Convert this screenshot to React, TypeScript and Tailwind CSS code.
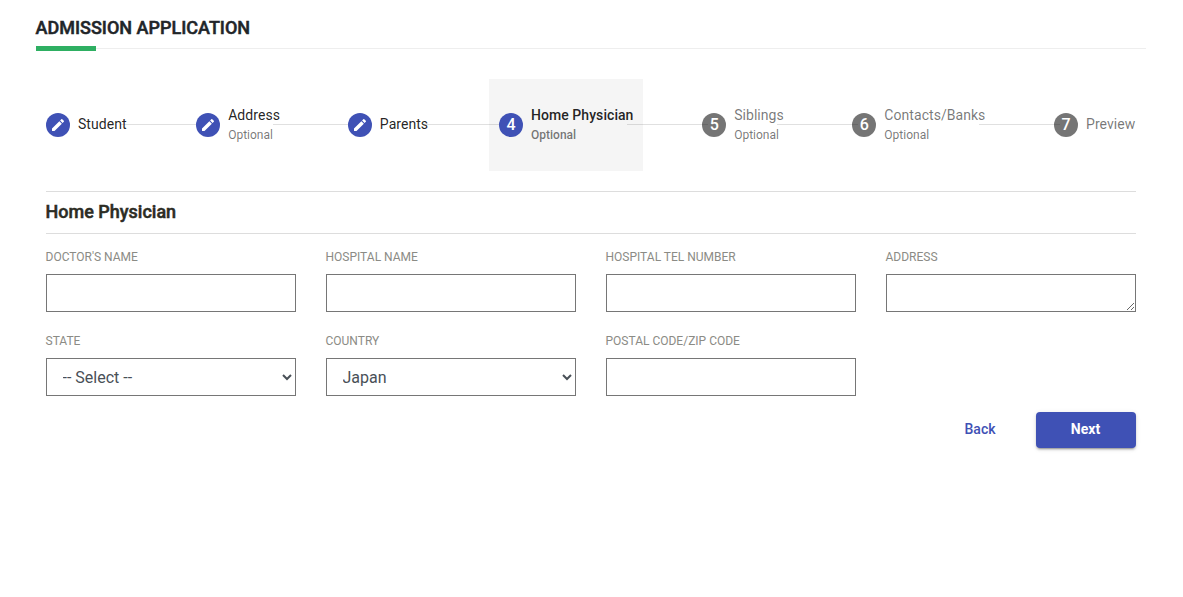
import { Fragment, type ReactNode } from "react";

type Step = { label: string; optional?: boolean; state: "done" | "active" | "todo"; width: string };

const steps: Step[] = [
  { label: "Student", state: "done", width: "w-[101px]" },
  { label: "Address", optional: true, state: "done", width: "w-[102.5px]" },
  { label: "Parents", state: "done", width: "w-[102px]" },
  { label: "Home Physician", optional: true, state: "active", width: "w-[154px]" },
  { label: "Siblings", optional: true, state: "todo", width: "w-[101px]" },
  { label: "Contacts/Banks", optional: true, state: "todo", width: "w-[152.5px]" },
  { label: "Preview", state: "todo", width: "w-[102px]" },
];

function Pencil() {
  return (
    <svg viewBox="0 0 24 24" className="size-4" fill="currentColor">
      <path d="M3 17.25V21h3.75L17.81 9.94l-3.75-3.75L3 17.25zM20.71 7.04a1 1 0 0 0 0-1.41l-2.34-2.34a1 1 0 0 0-1.41 0l-1.83 1.83 3.75 3.75 1.83-1.83z" />
    </svg>
  );
}

function StepHeader({ step, index }: { step: Step; index: number }) {
  const active = step.state === "active";
  const todo = step.state === "todo";
  return (
    <div
      className={`relative flex h-[92px] shrink-0 items-center pl-[10px] ${step.width} ${active ? "bg-black/4" : ""}`}
    >
      <div
        className={`mr-2 flex size-6 shrink-0 items-center justify-center rounded-full text-[16px] leading-6 font-medium text-white ${
          todo ? "bg-black/54" : "bg-[#3f51b5]"
        }`}
      >
        {step.state === "done" ? <Pencil /> : index + 1}
      </div>
      <div
        className={`pb-[2px] text-[14px] leading-[21px] whitespace-nowrap ${
          active ? "font-medium tracking-[0.06px]" : "tracking-[0.05px]"
        } ${todo ? "text-black/54" : "text-black/87"}`}
      >
        <div>{step.label}</div>
        {step.optional && <div className="text-[12px] leading-[18px] tracking-normal text-black/54">Optional</div>}
      </div>
    </div>
  );
}

function Field({ label, children }: { label: string; children: ReactNode }) {
  return (
    <label className="block h-[84px]">
      <span className="mb-2 block text-[12px] leading-[18px] text-[#8b8b85]">{label}</span>
      {children}
    </label>
  );
}

const control = "block h-[38px] w-full border border-[#767676] bg-white text-[16px] text-[#495057] outline-none";

export default function App() {
  return (
    <div className="h-[597px] overflow-hidden bg-white px-9 pt-[15px] font-[Roboto,sans-serif] text-[#212529]">
      <header className="w-[1110px]">
        <h1 className="-ml-[0.5px] h-[31px] text-[18px] leading-[25px] font-medium [-webkit-text-stroke:0.5px]">ADMISSION APPLICATION</h1>
        <div className="flex h-[5px] items-center">
          <div className="h-[5px] w-[60px] bg-[#2eaf62]" />
          <div className="h-px flex-1 bg-[#eeeeee]" />
        </div>
      </header>

      <nav className="mt-7 flex w-[1110px] items-center">
        {steps.map((step, i) => (
          <Fragment key={step.label}>
            {i > 0 && <div className="-mx-4 mb-[2px] h-px flex-1 bg-black/12" />}
            <StepHeader step={step} index={i} />
          </Fragment>
        ))}
      </nav>

      <main className="mt-5 ml-[9.5px] w-[1090px]">
        <h2 className="h-[43px] border-y border-[#dddddd] text-[18px] leading-[39px] font-medium text-[#2c2c24] [-webkit-text-stroke:0.5px]">
          Home Physician
        </h2>
        <form className="mt-[14px]">
          <div className="grid grid-cols-4 gap-x-[30px]">
            <Field label="DOCTOR'S NAME">
              <input className={control} />
            </Field>
            <Field label="HOSPITAL NAME">
              <input className={control} />
            </Field>
            <Field label="HOSPITAL TEL NUMBER">
              <input className={control} />
            </Field>
            <Field label="ADDRESS">
              <textarea className={`${control} resize overflow-auto`} />
            </Field>
            <Field label="STATE">
              <select className={`${control} px-3`}>
                <option>-- Select --</option>
              </select>
            </Field>
            <Field label="COUNTRY">
              <select className={`${control} px-3`}>
                <option>Japan</option>
              </select>
            </Field>
            <Field label="POSTAL CODE/ZIP CODE">
              <input className={control} />
            </Field>
          </div>
          <div className="mt-[-4px] flex justify-end gap-[24px] text-[14px] leading-[34px] font-medium">
            <button type="button" className="h-9 px-4 pb-[2px] text-[#3f51b5]">
              Back
            </button>
            <button
              type="button"
              className="h-9 w-[100px] rounded-[4px] bg-[#3f51b5] pb-[2px] font-bold text-white shadow-[0_3px_1px_-2px_rgba(0,0,0,0.2),0_2px_2px_0_rgba(0,0,0,0.14),0_1px_5px_0_rgba(0,0,0,0.12)]"
            >
              Next
            </button>
          </div>
        </form>
      </main>
    </div>
  );
}
